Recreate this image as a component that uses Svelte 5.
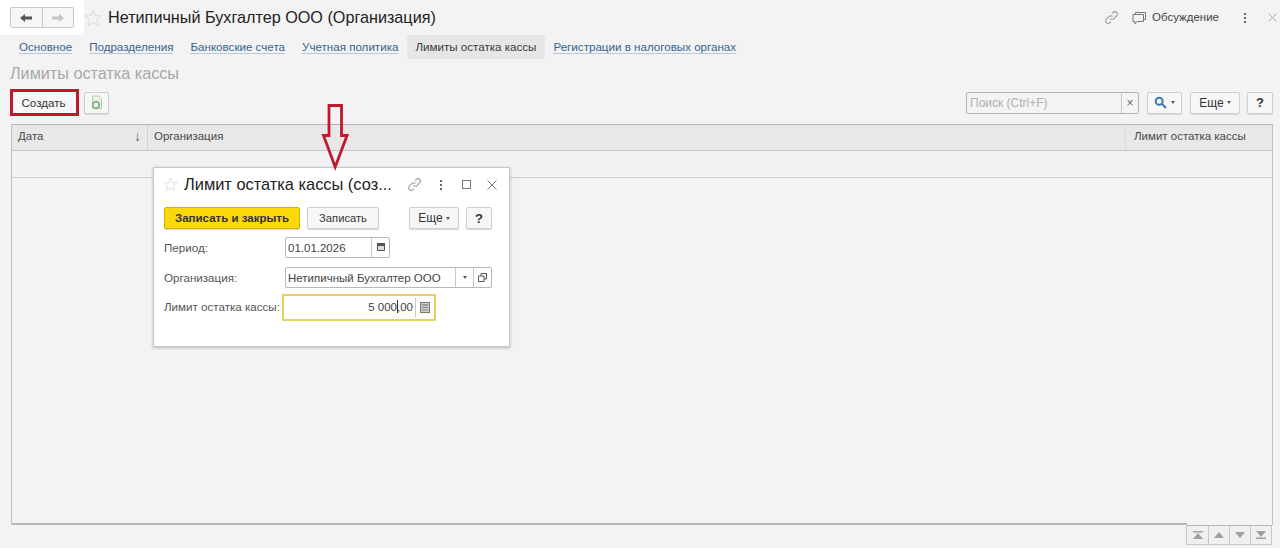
<script>
  const tabs = ['Основное', 'Подразделения', 'Банковские счета', 'Учетная политика', 'Лимиты остатка кассы', 'Регистрации в налоговых органах'];
  const active = 'Лимиты остатка кассы';
</script>

{#snippet star(size)}
  <svg class="star" width={size} height={size} viewBox="0 0 20 20"><path d="M10 1.5l2.5 5.7 6.1.6-4.6 4.1 1.4 6.1L10 14.8l-5.4 3.2 1.4-6.1-4.6-4.1 6.1-.6z" fill="none" stroke="#dedede" stroke-width="1.2"/></svg>
{/snippet}
{#snippet link(size)}
  <svg width={size} height={size} viewBox="0 0 16 16" fill="none" stroke="#9a9a9a" stroke-width="1.1"><path d="M6.8 9.2a2.6 2.6 0 0 0 3.7 0l3-3a2.6 2.6 0 0 0-3.7-3.7L8.6 3.7"/><path d="M9.2 6.8a2.6 2.6 0 0 0-3.7 0l-3 3a2.6 2.6 0 0 0 3.7 3.7l1.2-1.2"/></svg>
{/snippet}
{#snippet dots()}
  <svg width="4" height="12" viewBox="0 0 4 12" fill="#666"><rect x="1" y="1" width="2" height="2"/><rect x="1" y="5" width="2" height="2"/><rect x="1" y="9" width="2" height="2"/></svg>
{/snippet}
{#snippet calendar()}
  <svg width="10" height="10" viewBox="0 0 10 10"><path d="M1.500 1.500h7v7h-7z" fill="#ddd" stroke="#555"/><rect x="1" y="1" width="8" height="3" fill="#555"/></svg>
{/snippet}

<div class="page">
  <header class="top">
    <div class="nav-patch">
      <div class="nav-group">
        <button class="nav-btn" aria-label="Назад"><svg width="14" height="10" viewBox="0 0 14 10"><path d="M1 5l5-4v2.5h7v3H6V9z" fill="#555"/></svg></button>
        <button class="nav-btn" aria-label="Вперед"><svg width="14" height="10" viewBox="0 0 14 10"><path d="M13 5L8 1v2.5H1v3h7V9z" fill="#c4c4c4"/></svg></button>
      </div>
    </div>
    <span class="top-star">{@render star(18)}</span>
    <h1>Нетипичный Бухгалтер ООО (Организация)</h1>
    <div class="top-right">
      <span class="i-link">{@render link(15)}</span>
      <svg class="i-chat" width="15" height="14" viewBox="0 0 15 14" fill="none" stroke="#777"><path d="M3.5 3V1.5h10v7H12"/><path d="M1 3.5h10.500v7H5L3 13v-2.500H1z"/></svg>
      <span class="discuss">Обсуждение</span>
      <span class="i-dots">{@render dots()}</span>
      <svg class="i-close" width="9" height="9" viewBox="0 0 9 9" stroke="#aaa" fill="none"><path d="M.5.500l8 8M8.500.500l-8 8"/></svg>
    </div>
  </header>

  <nav class="tabs">
    {#each tabs as t}
      <span class="tab" class:active={t === active}><span class="tab-label">{t}</span></span>
    {/each}
  </nav>

  <h2>Лимиты остатка кассы</h2>

  <div class="toolbar">
    <span class="hl"><button class="btn create">Создать</button></span>
    <button class="btn icon-btn" aria-label="Загрузить">
      <svg width="14" height="15" viewBox="0 0 14 15"><path d="M2.500 1h6l3 3v9.500h-9z" fill="#eef2ee" stroke="#bcc7bc"/><circle cx="6" cy="10" r="3.300" fill="none" stroke="#7fb27f" stroke-width="1.800"/></svg>
    </button>
    <div class="spacer"></div>
    <div class="search">
      <span class="search-text">Поиск (Ctrl+F)</span>
      <span class="search-x">×</span>
    </div>
    <button class="btn find" aria-label="Найти">
      <svg width="13" height="13" viewBox="0 0 13 13" fill="none" stroke="#3c78b4" stroke-width="2"><circle cx="5.200" cy="5.200" r="3.500"/><path d="M8 8l4 4"/></svg>
      <i class="caret"></i>
    </button>
    <button class="btn more">Еще <i class="caret"></i></button>
    <button class="btn help">?</button>
  </div>

  <section class="table">
    <div class="thead">
      <div class="th c1"><span>Дата</span><span class="sort">↓</span></div>
      <div class="th c2">Организация</div>
      <div class="th c3">Лимит остатка кассы</div>
    </div>
    <div class="row"></div>
    <div class="body"></div>
    <div class="pager">
      <button aria-label="В начало"><svg width="12" height="8" viewBox="0 0 12 8" fill="#a0a0a0"><path d="M1 0h10v1.500H1zM6 2l5 6H1z"/></svg></button>
      <button aria-label="Вверх"><svg width="10" height="6" viewBox="0 0 10 6" fill="#a0a0a0"><path d="M5 0l5 6H0z"/></svg></button>
      <button aria-label="Вниз"><svg width="10" height="6" viewBox="0 0 10 6" fill="#a0a0a0"><path d="M5 6l5-6H0z"/></svg></button>
      <button aria-label="В конец"><svg width="12" height="8" viewBox="0 0 12 8" fill="#a0a0a0"><path d="M1 0h10L6 6zM1 6.500h10V8H1z"/></svg></button>
    </div>
  </section>

  <div class="dialog">
    <div class="d-head">
      <span class="d-star">{@render star(15)}</span>
      <span class="d-title">Лимит остатка кассы (соз...</span>
      <span class="d-link">{@render link(15)}</span>
      <span class="d-dots">{@render dots()}</span>
      <span class="d-max"></span>
      <svg class="d-close" width="10" height="10" viewBox="0 0 10 10" stroke="#777" fill="none"><path d="M.5.500l9 9M9.500.500l-9 9"/></svg>
    </div>
    <div class="d-bar">
      <button class="btn primary">Записать и закрыть</button>
      <button class="btn save">Записать</button>
      <div class="spacer"></div>
      <button class="btn d-more">Еще <i class="caret"></i></button>
      <button class="btn d-help">?</button>
    </div>
    <div class="form">
      <span class="f-label">Период:</span>
      <div class="field date">
        <span class="val">01.01.2026</span>
        <span class="cell w18">{@render calendar()}</span>
      </div>
      <span class="f-label">Организация:</span>
      <div class="field org">
        <span class="val">Нетипичный Бухгалтер ООО</span>
        <span class="cell w18"><i class="caret"></i></span>
        <span class="cell w18"><svg width="9" height="9" viewBox="0 0 9 9" fill="none" stroke="#555"><path d="M3 3V.5h5.500V6H6"/><path d="M.5 3h5.500v5.500H.5z"/></svg></span>
      </div>
      <span class="f-label limit-label">Лимит остатка кассы:</span>
      <div class="field limit">
        <span class="val right">5 000<span class="cursor"></span>,00</span>
        <span class="cell calc"><svg width="10" height="11" viewBox="0 0 10 11"><rect x=".5" y=".5" width="9" height="10" fill="#ccc" stroke="#777"/><path d="M2 3h6" stroke="#666"/><path d="M2 5.500h6M2 8h6" stroke="#888"/></svg></span>
      </div>
    </div>
  </div>

  <svg class="arrow" width="28" height="68" viewBox="0 0 28 68" fill="none" stroke="#c0182c" stroke-width="2.800"><path d="M8 2.500h12.500v30H26L14.200 64 2.500 32.500H8z"/></svg>
</div>

<style>
  :global(body) { margin: 0; }
  * { box-sizing: border-box; }
  .page {
    position: relative; width: 1280px; height: 548px; overflow: hidden;
    background: #f3f3f3; color: #333;
    font-family: "Liberation Sans", Arial, sans-serif; font-size: 12px;
    display: flex; flex-direction: column;
  }
  button { font-family: inherit; margin: 0; cursor: default; }

  .top { height: 35px; display: flex; align-items: center; flex: none; }
  .nav-patch { width: 84px; height: 35px; background: #fff; padding: 7px 0 0 10px; flex: none; align-self: flex-start; }
  .nav-group { display: flex; width: 64px; height: 21px; border: 1px solid #c8c8c8; border-radius: 2px; background: #f6f6f6; }
  .nav-btn { flex: 1; border: 0; background: none; padding: 0; display: flex; align-items: center; justify-content: center; }
  .nav-btn + .nav-btn { border-left: 1px solid #c8c8c8; }
  .top-star { display: flex; width: 18px; margin-right: 6px; }
  h1 { margin: 0; font-size: 16.200px; font-weight: 400; color: #222; }
  .top-right { margin-left: auto; display: flex; align-items: center; padding-right: 3px; }
  .i-link { display: flex; margin-right: 13px; }
  .i-chat { margin-right: 5px; }
  .discuss { font-size: 11.500px; color: #444; margin-right: 24px; padding-bottom: 2px; }
  .i-dots { display: flex; margin-right: 21px; }
  .i-close { display: block; }

  .tabs { display: flex; padding-left: 10.500px; height: 24px; flex: none; align-items: stretch; font-size: 11.600px; }
  .tab { padding: 0 8.500px 1px; display: flex; align-items: center; color: #35648f; }
  .tab-label { border-bottom: 1px solid #b8c8d8; line-height: 13px; }
  .tab.active { background: #e6e6e6; color: #3a3a3a; border-radius: 2px; }
  .tab.active .tab-label { border-bottom-color: transparent; }

  h2 { margin: 5px 0 0 10px; height: 19px; font-size: 16.200px; line-height: 18px; font-weight: 400; color: #a8a8a8; flex: none; }

  .toolbar { display: flex; align-items: center; height: 27px; margin: 6px 7px 0 10px; flex: none; }
  .spacer { flex: 1; }
  .btn { height: 22px; border: 1px solid #cfcfcf; border-radius: 2px; background: #f7f7f7; color: #333; font-size: 12px; padding: 0; display: flex; align-items: center; justify-content: center; box-shadow: 0 1px 1px #d8d8d8; }
  .hl { border: 3px solid #c3182c; width: 69px; height: 27px; display: flex; }
  .create { width: 100%; height: 100%; border: 0; box-shadow: none; font-size: 11.600px; padding-right: 2px; }
  .icon-btn { width: 25px; margin-left: 5px; }
  .search { width: 173px; height: 22px; border: 1px solid #b4b4b4; border-radius: 2px; background: #f4f4f4; display: flex; align-items: center; margin-right: 8px; }
  .search-text { flex: 1; padding-left: 3px; color: #b0b0b0; }
  .search-x { width: 17px; border-left: 1px solid #c8c8c8; height: 100%; display: flex; align-items: center; justify-content: center; color: #666; font-size: 12px; }
  .find { width: 35px; gap: 4px; margin-right: 8px; }
  .more { width: 50px; margin-right: 7px; gap: 3px; }
  .help { width: 26px; font-weight: 700; font-size: 13px; }
  .caret { display: inline-block; width: 0; height: 0; border: 2.500px solid transparent; border-top: 3px solid #555; border-bottom: 0; vertical-align: middle; }

  .table { margin: 8px 7px 0 11px; height: 401px; flex: none; position: relative; border-left: 1px solid #c0c0c0; border-right: 1px solid #c0c0c0; border-top: 1px solid #b4b4b4; display: flex; flex-direction: column; }
  .thead { display: flex; height: 26px; background: #e8e8e8; border-bottom: 1px solid #c4c4c4; flex: none; }
  .th { display: flex; align-items: center; padding: 0 6px 4px; color: #4a4a4a; font-size: 11.500px; }
  .c1 { width: 136px; justify-content: space-between; border-right: 1px solid #d2d2d2; }
  .sort { color: #666; font-size: 14px; }
  .c2 { flex: 1; }
  .c3 { width: 147px; border-left: 1px solid #dcdcdc; padding-left: 8px; }
  .row { height: 27px; background: #f2f2f2; border-bottom: 1px solid #d0d0d0; flex: none; }
  .body { flex: 1; border-bottom: 2px solid #b8b8b8; margin-right: 85px; }
  .pager { position: absolute; right: 0; bottom: -20px; display: flex; height: 20px; border: 1px solid #c8c8c8; border-top: 1px solid #b8b8b8; background: #f0f0f0; }
  .pager button { width: 21px; border: 0; border-left: 1px solid #c8c8c8; background: none; padding: 0; display: flex; align-items: center; justify-content: center; }
  .pager button:first-child { border-left: 0; }

  .dialog { position: absolute; left: 153px; top: 167px; width: 357px; height: 180px; background: #fff; border: 1px solid #c8c8c8; box-shadow: 0 1px 3px rgba(0,0,0,.25); padding: 0 16px 0 9px; }
  .d-head { display: flex; align-items: center; height: 33px; margin-right: -4px; }
  .d-star { display: flex; width: 21px; flex: none; }
  .d-title { font-size: 16.400px; color: #222; white-space: nowrap; width: 223px; flex: none; }
  .d-link { display: flex; margin-right: 17px; flex: none; }
  .d-dots { display: flex; margin-right: 19px; flex: none; }
  .d-max { width: 9px; height: 9px; border: 1px solid #777; margin-right: 16px; flex: none; }
  .d-close { display: block; flex: none; }
  .d-bar { display: flex; align-items: center; height: 24px; margin: 5px 0 0 1px; }
  .primary { width: 136px; background: #fbd80a; border-color: #d2b400; color: #333; font-weight: 700; font-size: 11.500px; }
  .save { width: 72px; margin-left: 7px; font-size: 11.200px; }
  .d-more { width: 50px; margin-right: 7px; gap: 3px; }
  .d-help { width: 26px; font-weight: 700; font-size: 13px; margin-right: 1px; }
  .form { display: grid; grid-template-columns: 121px 1fr; grid-auto-rows: 30px; align-items: center; margin: 2px 0 0 1px; }
  .f-label { color: #555; font-size: 11.600px; white-space: nowrap; }
  .limit-label { padding-bottom: 2px; }
  .field { height: 21px; border: 1px solid #b8b8b8; border-radius: 2px; display: flex; align-items: center; background: #fff; color: #444; font-size: 11.500px; }
  .val { flex: 1; padding: 1px 0 0 2px; white-space: nowrap; }
  .cell { height: 100%; display: flex; align-items: center; justify-content: center; border-left: 1px solid #c8c8c8; flex: none; }
  .w18 { width: 18px; }
  .date { width: 105px; }
  .org { width: 207px; }
  .limit { width: 154px; height: 27px; margin-left: -3px; border: 2px solid #e8d060; border-radius: 1px; }
  .right { text-align: right; padding: 0 2px 1px 0; }
  .cursor { display: inline-block; width: 1px; height: 13px; background: #333; vertical-align: -2px; margin-right: -1px; }
  .calc { width: 19px; height: 19px; }
  .arrow { position: absolute; left: 321px; top: 103px; }
</style>
